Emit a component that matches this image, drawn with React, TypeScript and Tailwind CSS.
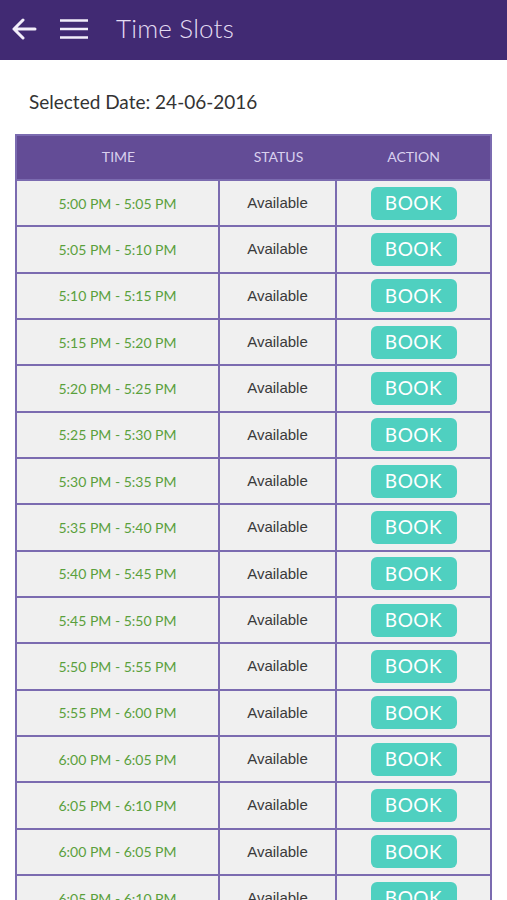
import React from "react";

const slots = [
  "5:00 PM - 5:05 PM",
  "5:05 PM - 5:10 PM",
  "5:10 PM - 5:15 PM",
  "5:15 PM - 5:20 PM",
  "5:20 PM - 5:25 PM",
  "5:25 PM - 5:30 PM",
  "5:30 PM - 5:35 PM",
  "5:35 PM - 5:40 PM",
  "5:40 PM - 5:45 PM",
  "5:45 PM - 5:50 PM",
  "5:50 PM - 5:55 PM",
  "5:55 PM - 6:00 PM",
  "6:00 PM - 6:05 PM",
  "6:05 PM - 6:10 PM",
  "6:00 PM - 6:05 PM",
  "6:05 PM - 6:10 PM",
];

export default function App() {
  return (
    <div className="w-[507px] h-[900px] overflow-hidden bg-white" style={{ fontFamily: "Lato, 'Open Sans', sans-serif" }}>
      <div className="h-[60px] bg-[#412a73] flex items-center pb-[3px]">
        <svg width="26" height="22" viewBox="0 0 26 22" className="ml-[11px]">
          <path d="M24 11H3M12 2L3 11l9 9" stroke="#f2eefa" strokeWidth="3" fill="none" strokeLinecap="round" strokeLinejoin="round" />
        </svg>
        <svg width="30" height="22" viewBox="0 0 30 22" className="ml-[22px]">
          <path d="M1 2.5h28M1 11h28M1 19.5h28" stroke="#f2eefa" strokeWidth="2.6" fill="none" />
        </svg>
        <div className="ml-[27px] text-[26px] font-light text-[#e4dcf2] tracking-[0.2px]">Time Slots</div>
      </div>
      <div className="pt-[28px] pl-[29px] text-[19px] text-[#333] h-[74px]">Selected Date: 24-06-2016</div>
      <div className="ml-[15px] w-[477px] border-l-2 border-r-2 border-t-2 border-[#7b6bb0]">
        <div className="grid grid-cols-[203px_117px_153px] h-[43px] bg-[#634c96] text-[14px] text-[#d9d0ee] items-center pb-[3px]">
          <div className="text-center">TIME</div>
          <div className="text-center">STATUS</div>
          <div className="text-center">ACTION</div>
        </div>
        {slots.map((s, i) => (
          <div key={i} className="grid grid-cols-[203px_117px_153px] h-[46.33px] bg-[#f0f0f0] border-t-2 border-[#7b6bb0] items-center">
            <div className="h-full flex items-center justify-center text-[14px] text-[#5aa03c] border-r-2 border-[#7b6bb0]">{s}</div>
            <div className="h-full flex items-center justify-center text-[15px] text-[#3a3a3a] border-r-2 border-[#7b6bb0]" style={{ fontFamily: "'Liberation Sans', Arial, sans-serif" }}>Available</div>
            <div className="h-full flex items-center justify-center">
              <div className="w-[86px] h-[33px] rounded-[6px] bg-[#4fd0c0] text-white text-[19px] flex items-center justify-center tracking-[0.5px]">BOOK</div>
            </div>
          </div>
        ))}
      </div>
    </div>
  );
}
